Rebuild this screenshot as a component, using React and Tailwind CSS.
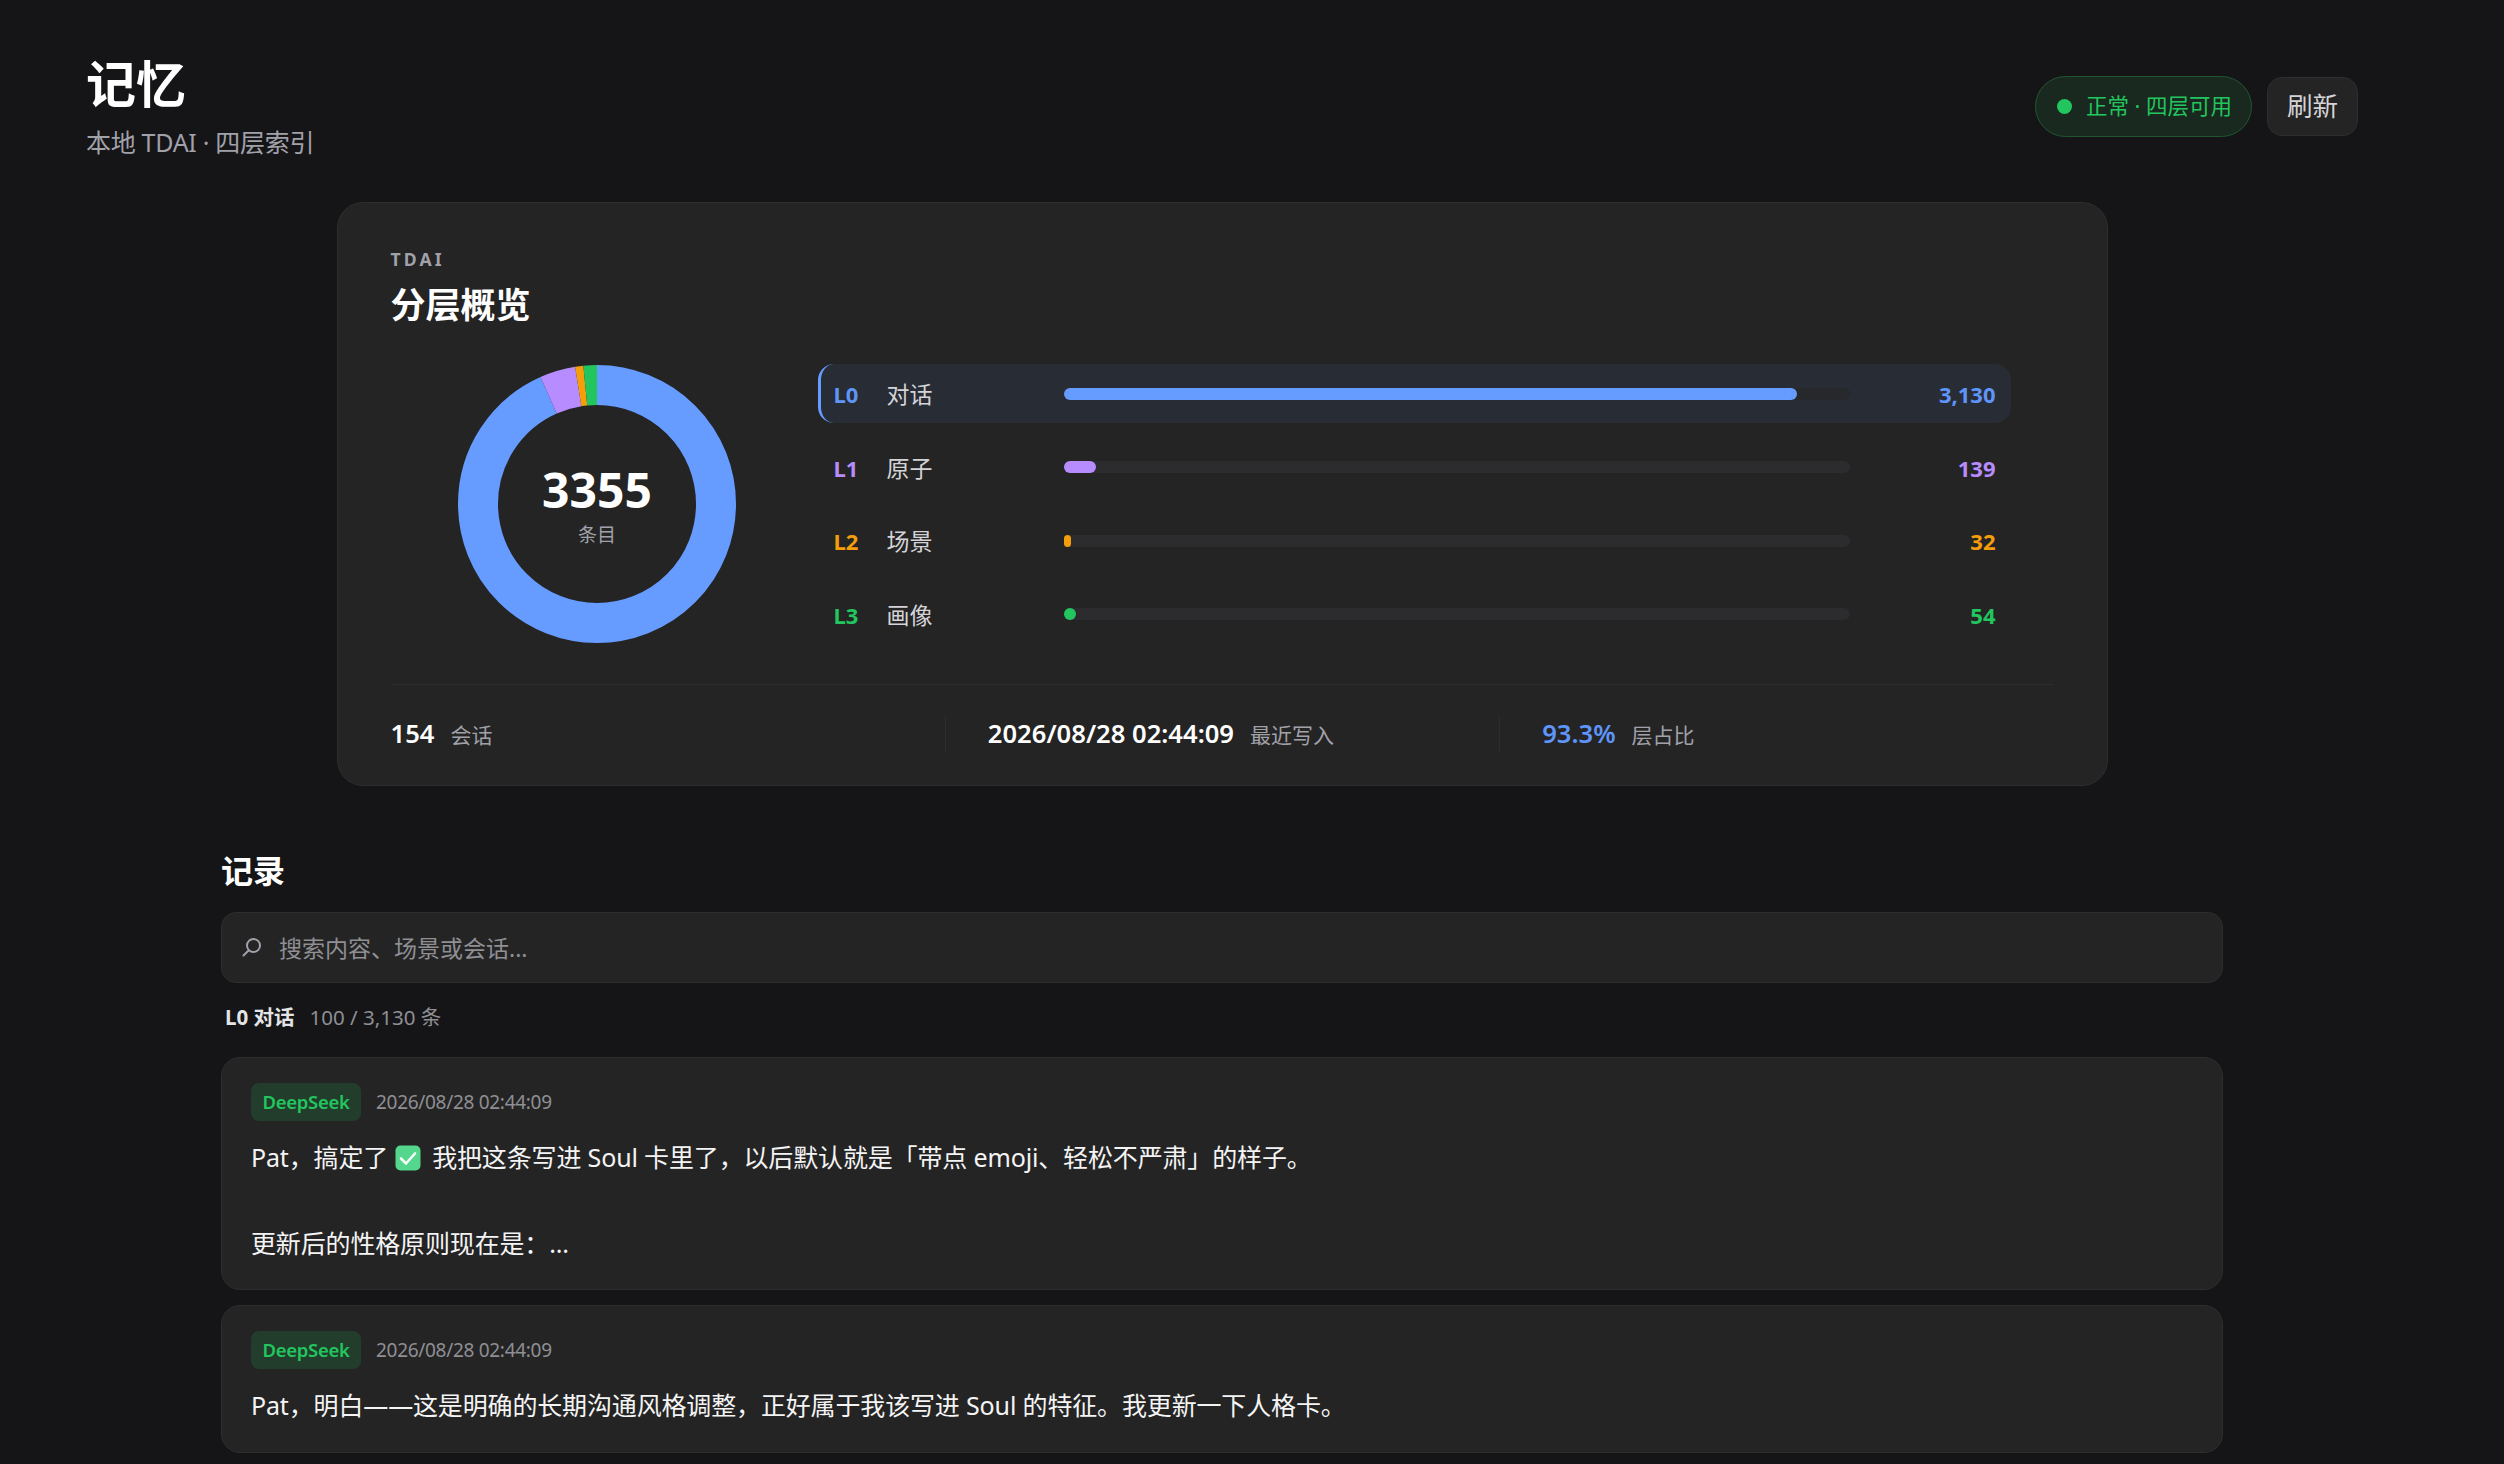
import React from "react";

const FONT = '"Noto Sans", "Noto Sans CJK SC", sans-serif';

const layers = [
  { id: "L0", name: "对话", count: 3130, label: "3,130", fill: 93.3, color: "#669cff", text: "text-[#5f95f8]", bar: "bg-[#669cff]" },
  { id: "L1", name: "原子", count: 139, label: "139", fill: 4.1, color: "#b78cff", text: "text-[#b78cff]", bar: "bg-[#b78cff]" },
  { id: "L2", name: "场景", count: 32, label: "32", fill: 1, color: "#f59e0b", text: "text-[#f59e0b]", bar: "bg-[#f59e0b]" },
  { id: "L3", name: "画像", count: 54, label: "54", fill: 1.6, color: "#22c55e", text: "text-[#22c55e]", bar: "bg-[#22c55e]" },
];

const Donut = () => {
  const total = 3355;
  const r = 119;
  const circ = 2 * Math.PI * r;
  let offset = 0;

  return (
    <div className="relative h-[278px] w-[278px]">
      <svg viewBox="0 0 278 278" className="h-full w-full -rotate-90">
        {layers.map((l) => {
          const len = (l.count / total) * circ;
          const el = (
            <circle
              key={l.id}
              cx="139"
              cy="139"
              r={r}
              fill="none"
              stroke={l.color}
              strokeWidth="40"
              strokeDasharray={`${len} ${circ - len}`}
              strokeDashoffset={-offset}
            />
          );
          offset += len;
          return el;
        })}
      </svg>
      <div className="absolute inset-0 flex flex-col items-center justify-center pt-[5px]">
        <div className="text-[48px] leading-[50px] font-bold text-white">3355</div>
        <div className="mt-[8px] text-[19px] leading-[24px] text-[#a1a1aa]">条目</div>
      </div>
    </div>
  );
};

const LayerRow = ({ layer, active }) => (
  <div
    className={
      active
        ? "flex h-[59px] items-center rounded-[16px] border-l-[3px] border-[#669cff] bg-[#282c34] pr-[15px] pl-[13px]"
        : "flex h-[59px] items-center rounded-[16px] border-l-[3px] border-transparent pr-[15px] pl-[13px]"
    }
  >
    <span className={`w-[53px] pt-[2px] text-[22px] font-bold ${layer.text}`}>{layer.id}</span>
    <span className="w-[177px] pt-[2px] text-[23px] text-[#d4d4d8]">{layer.name}</span>
    <div className={active ? "h-[12px] w-[786px] rounded-full bg-[#26282c]" : "h-[12px] w-[786px] rounded-full bg-[#2c2c2e]"}>
      <div className={`h-full rounded-full ${layer.bar}`} style={{ width: `${layer.fill}%` }} />
    </div>
    <span className={`flex-1 pt-[2px] text-right text-[22px] font-bold ${layer.text}`}>{layer.label}</span>
  </div>
);

const Stat = ({ value, label, valueClass, first }) => (
  <div className={first ? "flex h-[36px] items-center gap-[16px]" : "flex h-[36px] items-center gap-[16px] border-l border-[#2d2d2d] pl-[42px]"}>
    <span className={`text-[25.6px] font-semibold ${valueClass}`}>{value}</span>
    <span className="mt-[3px] text-[21px] text-[#a1a1aa]">{label}</span>
  </div>
);

const CheckEmoji = () => (
  <svg viewBox="0 0 26 26" className="mr-[11px] ml-[7px] inline-block h-[26px] w-[26px] align-[-4px]">
    <rect x="0.5" y="0.5" width="25" height="25" rx="5" fill="#55d68d" />
    <path d="M6 13.5l5 5 9-10" fill="none" stroke="#f4fff8" strokeWidth="2.6" strokeLinecap="round" strokeLinejoin="round" />
  </svg>
);

const Record = ({ children, className }) => (
  <div className={`rounded-[19px] border border-[#2e2e2e] bg-[#242424] px-[29px] pt-[25px] ${className}`}>
    <div className="flex items-center gap-[15px]">
      <span className="flex h-[38px] w-[110px] items-center justify-center rounded-[8px] bg-[#233d2c] text-[18.5px] font-semibold tracking-[-0.3px] text-[#22c55e]">
        DeepSeek
      </span>
      <span className="text-[19px] tracking-[-0.3px] text-[#8f8f94]">2026/08/28 02:44:09</span>
    </div>
    <div className="mt-[15px] text-[25px] leading-[43px] tracking-[-0.15px] text-[#f4f4f5]">{children}</div>
  </div>
);

export default function App() {
  return (
    <div className="h-[1464px] w-full overflow-hidden bg-[#151517]" style={{ fontFamily: FONT }}>
      <div className="w-[2444px] px-[86px] pt-[54px]">
        <header className="flex items-center justify-between">
          <div>
            <h1 className="text-[50px] leading-[60px] font-bold text-white">记忆</h1>
            <p className="mt-[12px] text-[25px] leading-[32px] tracking-[-0.3px] text-[#a1a1aa]">本地 TDAI · 四层索引</p>
          </div>
          <div className="flex items-center gap-[15px]">
            <div className="flex h-[61px] w-[217px] items-center gap-[14px] rounded-full border border-[#1f5631] bg-[#19291f] pl-[21px]">
              <span className="h-[15px] w-[15px] rounded-full bg-[#22c55e]" />
              <span className="text-[21.5px] text-[#22c55e]">正常 · 四层可用</span>
            </div>
            <button className="h-[59px] w-[91px] rounded-[15px] border border-[#2e2e2e] bg-[#242424] pt-[3px] text-[25.6px] text-[#d4d4d8]">
              刷新
            </button>
          </div>
        </header>

        <section className="mx-auto mt-[44px] w-[1771px] rounded-[26px] border border-[#2e2e2e] bg-[#242424] px-[53px] pt-[44px] pb-[33px]">
          <div className="text-[17.6px] leading-[24px] font-bold tracking-[0.18em] text-[#a1a1aa]">TDAI</div>
          <h2 className="mt-[11px] text-[35px] leading-[46px] font-bold text-white">分层概览</h2>

          <div className="mt-[36px] flex items-center">
            <div className="flex w-[413px] justify-center">
              <Donut />
            </div>
            <div className="ml-[14px] flex w-[1193px] flex-col gap-[14.6px]">
              {layers.map((l, i) => (
                <LayerRow key={l.id} layer={l} active={i === 0} />
              ))}
            </div>
          </div>

          <div className="mt-[40px] grid grid-cols-3 border-t border-[#2d2d2d] pt-[31px]">
            <Stat first value="154" label="会话" valueClass="text-white" />
            <Stat value="2026/08/28 02:44:09" label="最近写入" valueClass="text-white" />
            <Stat value="93.3%" label="层占比" valueClass="font-medium text-[#5f95f8]" />
          </div>
        </section>

        <section className="mx-auto mt-[64px] w-[2002px]">
          <h2 className="text-[32px] leading-[42px] font-bold text-white">记录</h2>

          <div className="mt-[20px] flex h-[71px] items-center rounded-[15px] border border-[#2e2e2e] bg-[#242424] pl-[20px]">
            <svg viewBox="0 0 20 20" className="h-[20px] w-[20px] text-[#a1a1aa]" fill="none" stroke="currentColor" strokeWidth="2" strokeLinecap="round">
              <circle cx="11.5" cy="8.5" r="6.5" />
              <path d="M6.5 13.5L1.5 18.5" />
            </svg>
            <span className="ml-[17px] pt-[2px] text-[23px] text-[#8f8f94]">搜索内容、场景或会话...</span>
          </div>

          <div className="mt-[18px] flex h-[34px] items-center pl-[4px]">
            <span className="text-[20.5px] font-bold text-[#e4e4e7]">L0 对话</span>
            <span className="ml-[15px] text-[20.5px] text-[#8f8f94]">100 / 3,130 条</span>
          </div>

          <div className="mt-[22px] flex flex-col gap-[15px]">
            <Record className="h-[233px]">
              Pat，搞定了
              <CheckEmoji />
              我把这条写进 Soul 卡里了，以后默认就是「带点 emoji、轻松不严肃」的样子。
              <br />
              <br />
              更新后的性格原则现在是：...
            </Record>
            <Record className="h-[148px]">Pat，明白——这是明确的长期沟通风格调整，正好属于我该写进 Soul 的特征。我更新一下人格卡。</Record>
          </div>
        </section>
      </div>
    </div>
  );
}
